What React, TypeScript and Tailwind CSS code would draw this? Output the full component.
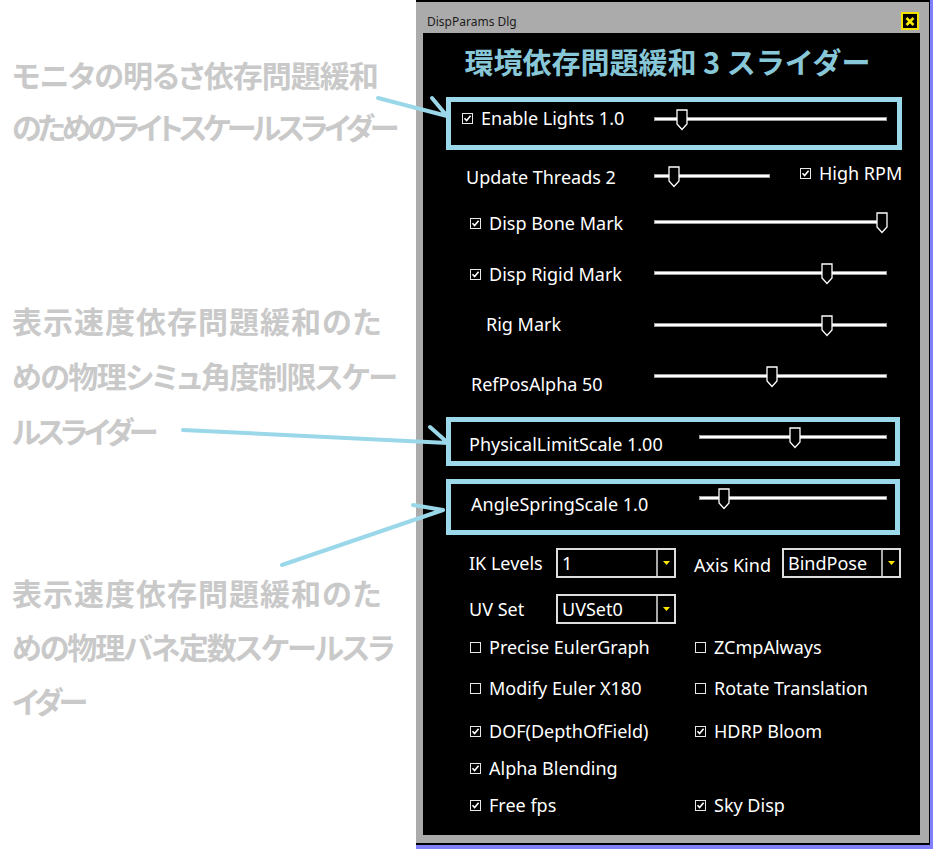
import React from "react";

const ui = "font-['Noto_Sans','Open_Sans',sans-serif]";
const jp = "font-['Noto_Sans_CJK_JP','Noto_Sans',sans-serif]";

const Check = ({ on }: { on?: boolean }) => (
  <span className="inline-flex w-[11px] h-[11px] shrink-0 items-center justify-center border border-[#e8e8e8] bg-black">
    {on && (
      <svg width="9" height="9" viewBox="0 0 9 9">
        <path d="M1.5 4.3L3.6 6.5L7.6 1.8" stroke="#fff" strokeWidth="1.6" fill="none" />
      </svg>
    )}
  </span>
);

const Slider = ({ w, pos }: { w: number; pos: number }) => (
  <div className="relative h-[22px] shrink-0" style={{ width: w }}>
    <div className="absolute left-0 right-0 top-[8px] h-[4px] bg-white border border-[#9c9c9c]" />
    <svg className="absolute top-0" style={{ left: pos }} width="12" height="22" viewBox="0 0 12 22">
      <path d="M1 1H11V15L6 20.5L1 15Z" fill="#000" stroke="#fff" strokeWidth="1.3" />
    </svg>
  </div>
);

const Combo = ({ w, value }: { w: number; value: string }) => (
  <div className="flex h-[30px] shrink-0 border-2 border-[#dedede] bg-black" style={{ width: w }}>
    <div className="flex flex-1 items-center pl-[4px] text-white">{value}</div>
    <div className="flex w-[18px] items-center justify-center border-l-2 border-[#a8a8a8]">
      <svg width="7" height="4" viewBox="0 0 7 4">
        <path d="M0 0H7L3.5 4Z" fill="#ffe800" />
      </svg>
    </div>
  </div>
);

const Opt = ({ on, label }: { on?: boolean; label: string }) => (
  <div className="flex items-center gap-[8px]">
    <Check on={on} />
    <span>{label}</span>
  </div>
);

const optRows = [
  { h: 40, left: [false, "Precise EulerGraph"], right: [false, "ZCmpAlways"] },
  { h: 42, left: [false, "Modify Euler X180"], right: [false, "Rotate Translation"] },
  { h: 44, left: [true, "DOF(DepthOfField)"], right: [true, "HDRP Bloom"] },
  { h: 30, left: [true, "Alpha Blending"], right: null },
  { h: 44, left: [true, "Free fps"], right: [true, "Sky Disp"] },
];

export default function App() {
  return (
    <div className="relative flex h-[849px] w-[933px] overflow-hidden bg-white">
      {/* notes on the left */}
      <div className={`w-[416px] shrink-0 pl-[12px] text-[30px] font-bold text-[#c9c9c9] whitespace-nowrap [font-feature-settings:'palt'] ${jp}`}>
        <div className="mt-[48px] leading-[52px]">
          <p className="tracking-[-1px]">モニタの明るさ依存問題緩和</p>
          <p className="tracking-[-4.3px]">のためのライトスケールスライダー</p>
        </div>
        <div className="mt-[141px] leading-[55px]">
          <p className="tracking-[1px]">表示速度依存問題緩和のた</p>
          <p className="tracking-[-1.5px]">めの物理シミュ角度制限スケー</p>
          <p className="tracking-[-4.5px]">ルスライダー</p>
        </div>
        <div className="mt-[107px] leading-[54px]">
          <p className="tracking-[1px]">表示速度依存問題緩和のた</p>
          <p className="tracking-[-2px]">めの物理バネ定数スケールスラ</p>
          <p className="tracking-[-4px]">イダー</p>
        </div>
      </div>

      {/* dialog window */}
      <div className="h-[849px] w-[517px] shrink-0 border-r-[3px] border-b-[4px] border-[#8080ff]">
        <div className="flex h-full flex-col border-t-2 border-r border-b-2 border-black bg-[#ababab] pl-[7px] pr-[9px]">
          <div className="flex h-[31px] shrink-0 items-start">
            <span className={`pl-[4px] pt-[12px] text-[12px] leading-[16px] text-[#1c1c1c] ${ui}`}>DispParams Dlg</span>
            <div className="ml-auto mr-[1px] mt-[10px] flex h-[18px] w-[18px] items-center justify-center border-2 border-[#f2e200] bg-black">
              <svg width="10" height="9" viewBox="0 0 10 9">
                <path d="M1.5 1L8.5 8M8.5 1L1.5 8" stroke="#f8ea00" strokeWidth="2.6" />
              </svg>
            </div>
          </div>

          <div className={`h-[802px] w-[497px] shrink-0 bg-black text-[18px] leading-[20px] text-white ${ui}`}>
            <div className="flex h-[64px] items-center justify-center pb-[8px] pr-[8px]">
              <span className={`text-[29px] font-bold leading-[36px] text-[#88c7d8] ${jp}`}>環境依存問題緩和 3 スライダー</span>
            </div>

            {/* Enable Lights */}
            <div className="ml-[23px] flex h-[53px] w-[456px] items-start border-[5px] border-[#9bd8ea]">
              <div className="mt-[6px] flex h-[20px] w-[203px] items-center gap-[8px] pl-[11px]">
                <Check on />
                <span>Enable Lights 1.0</span>
              </div>
              <div className="mt-[7px]">
                <Slider w={233} pos={22} />
              </div>
            </div>

            <div className="mt-[2px] flex h-[50px] items-center">
              <div className="w-[231px] pl-[43px]">Update Threads 2</div>
              <Slider w={116} pos={14} />
              <div className="mb-[8px] ml-[30px] flex items-center gap-[8px]">
                <Check on />
                <span>High RPM</span>
              </div>
            </div>

            <div className="flex h-[42px] items-center">
              <div className="flex w-[231px] items-center gap-[8px] pl-[47px]">
                <Check on />
                <span>Disp Bone Mark</span>
              </div>
              <Slider w={233} pos={222} />
            </div>

            <div className="flex h-[60px] items-center">
              <div className="flex w-[231px] items-center gap-[8px] pl-[47px]">
                <Check on />
                <span>Disp Rigid Mark</span>
              </div>
              <Slider w={233} pos={167} />
            </div>

            <div className="flex h-[40px] items-center">
              <div className="w-[231px] pl-[63px]">Rig Mark</div>
              <div className="mt-[4px]">
                <Slider w={233} pos={167} />
              </div>
            </div>

            <div className="flex h-[66px] items-center">
              <div className="mt-[14px] w-[231px] pl-[48px]">RefPosAlpha 50</div>
              <Slider w={233} pos={112} />
            </div>

            {/* PhysicalLimitScale */}
            <div className="ml-[23px] mt-[7px] flex h-[49px] w-[454px] items-start border-[5px] border-[#9bd8ea]">
              <div className="mt-[12px] w-[248px] pl-[18px]">PhysicalLimitScale 1.00</div>
              <div className="mt-[5px]">
                <Slider w={188} pos={90} />
              </div>
            </div>

            {/* AngleSpringScale */}
            <div className="ml-[23px] mt-[13px] flex h-[56px] w-[454px] items-start border-[5px] border-[#9bd8ea]">
              <div className="mt-[10px] w-[248px] pl-[20px]">AngleSpringScale 1.0</div>
              <div className="mt-[4px]">
                <Slider w={188} pos={19} />
              </div>
            </div>

            <div className="mt-[13px] flex h-[30px] items-center">
              <div className="w-[133px] pl-[46px]">IK Levels</div>
              <Combo w={120} value="1" />
              <div className="ml-[18px] mt-[4px] w-[88px]">Axis Kind</div>
              <Combo w={119} value="BindPose" />
            </div>

            <div className="mt-[16px] flex h-[30px] items-center">
              <div className="w-[133px] pl-[46px]">UV Set</div>
              <Combo w={120} value="UVSet0" />
            </div>

            <div className="mt-[3px]">
              {optRows.map((r, i) => (
                <div key={i} className="flex items-center" style={{ height: r.h }}>
                  <div className="w-[272px] pl-[47px]">
                    <Opt on={r.left[0] as boolean} label={r.left[1] as string} />
                  </div>
                  {r.right && <Opt on={r.right[0] as boolean} label={r.right[1] as string} />}
                </div>
              ))}
            </div>
          </div>
        </div>
      </div>

      {/* callout arrows */}
      <svg className="pointer-events-none absolute inset-0" width="933" height="849">
        <g stroke="#9ad8e9" strokeWidth="4" strokeLinecap="round" fill="none">
          <path d="M378 98L447 116M432 98L447 116" />
          <path d="M183 430L448 443M430 427L448 443" />
          <path d="M282 565L443 510M413 505L443 510" />
        </g>
      </svg>
    </div>
  );
}
